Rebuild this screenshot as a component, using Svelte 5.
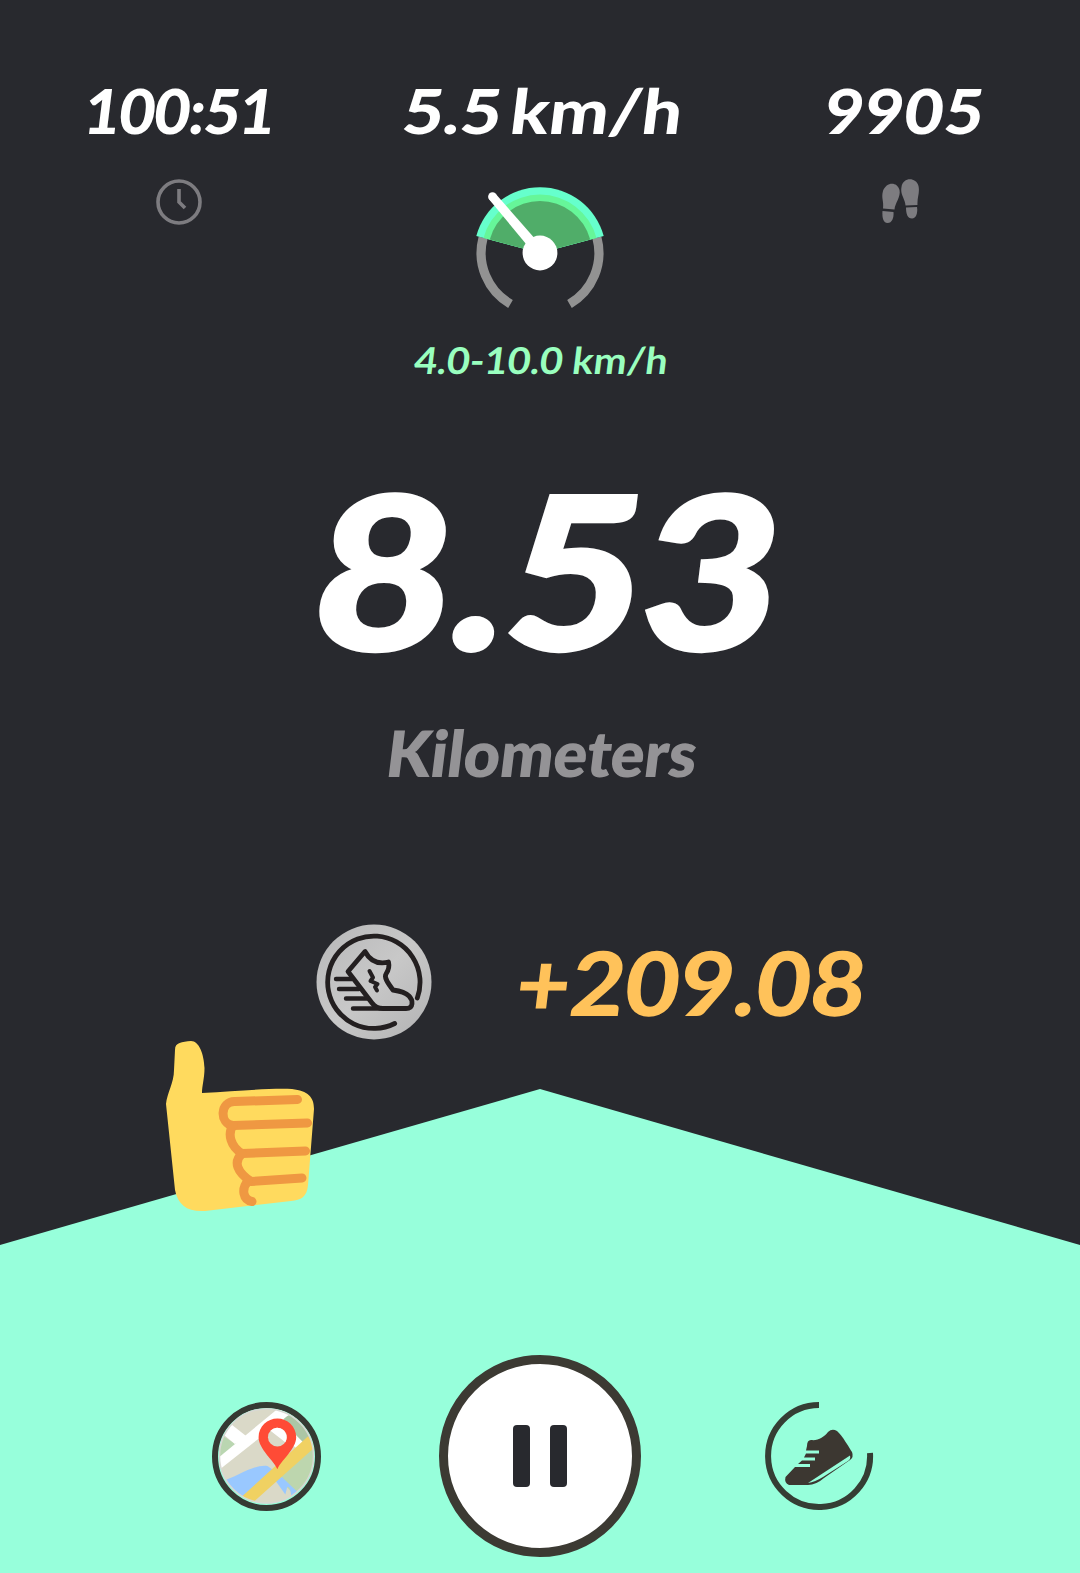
<script lang="ts">
  let time = "100:51";
  let speed = "5.5";
  let steps = 9905;
  let range = "4.0-10.0 km/h";
  let distance = "8.53";
  let earned = "+209.08";
  let paused = false;

  function togglePause(){
    paused = !paused;
  }
</script>

<main class="screen">
  <header class="stats">
    <div class="stat">
      <div class="value time">{time}</div>
      <svg class="icon" width="46" height="46" viewBox="0 0 46 46" fill="none" stroke="#7d7c80">
        <circle cx="23" cy="23" r="21" stroke-width="3.6" />
        <path d="M23 10v13l6 6" stroke-width="3.6" />
      </svg>
    </div>

    <div class="stat">
      <div class="value speed">{speed}<span class="unit">km/h</span></div>
      <svg class="gauge" width="136" height="128" viewBox="-68 -68 136 128">
        <path d="M-56.9 -15.2A58.9 58.9 0 0 0 -29.5 51M56.9 -15.2A58.9 58.9 0 0 1 29.5 51" fill="none" stroke="#929292" stroke-width="9.2" />
        <path d="M0 0L-63.7 -17A66 66 0 0 1 63.7 -17Z" fill="#66ffcc" />
        <path d="M0 0L-56.5 -15.1A58.5 58.5 0 0 1 56.5 -15.1Z" fill="#66f699" />
        <path d="M0 0L-50.2 -13.5A52 52 0 0 1 50.2 -13.5Z" fill="#50ad69" />
        <path d="M-50.8 -53.5L-4 3L4 -4L-44.2 -59Z" fill="#fff" />
        <circle cx="-47.5" cy="-56.3" r="4.4" fill="#fff" />
        <circle r="17.4" fill="#fff" />
      </svg>
      <div class="range">{range}</div>
    </div>

    <div class="stat">
      <div class="value steps">{steps}</div>
      <svg class="icon" width="40" height="46" viewBox="0 0 40 46" fill="#7d7c80">
        <path d="M2 29.500C3 22 0 19 2 12C5 3 16 2 18.500 11C20 18 14 24 13.500 30.500Z" />
        <path d="M1.500 32L12.500 33C13 39 11 44 6.500 44C2 44 1 38 1.500 32Z" />
        <path d="M24.500 26.500C24 19 19 16 20.500 8C22 -2 35 -2 37.500 7C39 14 36 18 36.500 26Z" />
        <path d="M25 28.500L36 28C37 34 35 39.500 31 39.500C26.500 39.500 25 35 25 28.500Z" />
      </svg>
    </div>
  </header>

  <section class="distance">
    <div class="number">{distance}</div>
    <div class="label">Kilometers</div>
  </section>

  <section class="earnings">
    <svg class="coin" width="116" height="116" viewBox="0 0 116 116" fill="none" stroke="#231f20" stroke-width="4.8" stroke-linecap="round" stroke-linejoin="round">
      <defs>
        <linearGradient id="silver" x1="0" y1="0" x2="1" y2="1">
          <stop offset="0" stop-color="#b7b7b8" />
          <stop offset=".5" stop-color="#c8c8c8" />
          <stop offset="1" stop-color="#b2b2b3" />
        </linearGradient>
      </defs>
      <circle cx="58" cy="58" r="57.500" fill="url(#silver)" stroke="none" />
      <path d="M101.300 74A46.200 46.200 0 1 0 78.700 99.500" />
      <path d="M49 27.500L32 47.500L56 79Q60 84.500 67 84.500H90C98 84.500 97 76 93 72C89 68 84 67 77 66C71 58 68 53 70 50Q74 44 72.500 38C60 41 53 35 49 27.500Z" />
      <path d="M53.500 47L57 53.500L54.500 57L61.500 60L59 63L61 66.500" stroke-width="4" />
      <path d="M20 55H36M23 65H43M30 74.500H51M37 84.500H68" stroke-width="4.400" />
    </svg>
    <div class="amount">{earned}</div>
  </section>

  <footer class="panel">
    <svg class="thumb" width="152" height="174" viewBox="0 0 152 174">
      <path d="M10 10C10 2 17 2 26 1C34 1 39 14 39.500 28C39.500 38 37 46 37 53C75 51 105 48 127 49C143 51 149 57 149 69L143 145C142 157 136 160 126 161L40 171C22 172 13 165 10 150L1 64C2 53 9 43 9 30Z" fill="#ffda5e" />
      <g fill="none" stroke="#ef9842" stroke-width="9" stroke-linecap="round" stroke-linejoin="round">
        <path d="M132.500 59.500L70 61.500C55 61 54 84 68 85.500L142.500 83" />
        <path d="M68 85.500C62 94 66 107 77 113.500L140.500 111" />
        <path d="M77 113.500C68 122 72 132 86 141.500L137 138" />
        <path d="M83 141C76 149 78 160 87 161.500" />
      </g>
    </svg>

    <nav class="controls">
      <button class="round map" aria-label="Map">
        <svg width="98" height="98" viewBox="0 0 98 98">
          <defs>
            <clipPath id="mapClip"><circle cx="49" cy="49" r="48" /></clipPath>
          </defs>
          <g clip-path="url(#mapClip)">
            <rect width="98" height="98" fill="#dad9c8" />
            <path d="M0 26L18 37L4 50L-2 50Z" fill="#bad6b1" />
            <path d="M67 8L98 8V36L82 38L66 22Z" fill="#acc6a5" />
            <path d="M98 36L59 70L80 91L98 75Z" fill="#bdd6ae" />
            <path d="M0 51L62 0L72 7L0 64Z" fill="#fff" />
            <path d="M12 16L4 26L17 37L30 30Z" fill="#fff" />
            <path d="M62 11L86 35L79 41L49 18Z" fill="#fff" />
            <path d="M0 76C20 70 36 57 50 59L61 67L82 87L75 94C73 83 73 80 70 80L68 88L56 71L30 91L11 87Z" fill="#99c8ff" />
            <path d="M91 29L98 40L33 98L22 92Z" fill="#f0d162" />
            <path d="M60 62.500C57 54 41 42 41 30C41 19 50 11 60 11C70 11 79 19 79 30C79 42 63 54 60 62.500Z" fill="#ff4b36" />
            <circle cx="60" cy="30" r="9.500" fill="#dad9c8" />
            <path d="M53 23.500A9.500 9.500 0 0 1 68 35Z" fill="#fff" />
          </g>
          <circle cx="49" cy="49" r="47.500" fill="none" stroke="#d8d8d4" stroke-width="1.500" />
        </svg>
      </button>

      <button class="round pause" onclick={togglePause} aria-label="Pause">
        <span class="bar"></span>
        <span class="bar"></span>
      </button>

      <button class="shoe" aria-label="Sneaker">
        <svg width="110" height="110" viewBox="0 0 110 110">
          <path d="M55 4A51 51 0 1 0 106 52" fill="none" stroke="#353e34" stroke-width="6" />
          <path d="M43 45Q43 39 47 39C54 40 60 36 64 31Q68 27 73 30C78 34 86 48 88 51Q90 56 86 59L60 77Q52 84 44 84H25Q20 82 21.500 76L31 66H46V63H34L38 59.500H51V56.500H40L42 52.500H55V49.500H42Z" fill="#3c3731" />
          <path d="M44 82L86 54.500Q87 58 84 60L59 76Q51 81 44 82Z" fill="#97ffdb" />
        </svg>
      </button>
    </nav>
  </footer>
</main>

<style>
  :global(body) {
    background: #28292e;
  }

  .screen {
    width: 1080px;
    height: 1573px;
    overflow: hidden;
    display: flex;
    flex-direction: column;
    background: #28292e;
    color: #fff;
    font-family: Lato, "Open Sans", sans-serif;
    font-weight: 900;
    white-space: nowrap;
  }

  .stats {
    display: grid;
    grid-template-columns: 357px 1fr 357px;
    height: 470px;
    box-sizing: border-box;
    padding-top: 79px;
    padding-right: 1px;
  }

  .stat {
    display: flex;
    flex-direction: column;
    align-items: center;
  }

  /* slanted upright glyphs instead of the cursive italic */
  .value,
  .range,
  .number,
  .label,
  .amount {
    transform: skewX(-7deg);
  }

  .value {
    font-size: 62px;
    line-height: 62px;
    font-weight: 900;
  }

  .time {
    letter-spacing: -1px;
    padding-left: 2px;
  }

  .speed {
    padding-left: 7px;
    transform: skewX(-7deg) scaleX(1.14);
  }

  .steps {
    letter-spacing: 1px;
    padding-left: 8px;
    transform: skewX(-7deg) scaleX(1.08);
  }

  .unit {
    margin-left: 8px;
  }

  .icon {
    margin-top: 38px;
  }

  .gauge {
    margin-top: 44px;
  }

  .range {
    margin-top: 28px;
    padding-left: 3px;
    font-size: 37px;
    line-height: 38px;
    font-weight: 700;
    color: #99ffbf;
    transform: skewX(-7deg) scaleX(1.07);
  }

  .distance {
    display: flex;
    flex-direction: column;
    align-items: center;
    height: 453px;
  }

  .number {
    padding-left: 17px;
    font-size: 213px;
    line-height: 196px;
    transform: skewX(-7deg) scaleX(1.1);
    -webkit-text-stroke: 3px #fff;
  }

  .label {
    margin-top: 55px;
    padding-left: 5px;
    font-size: 64px;
    line-height: 64px;
    font-weight: 800;
    color: #949396;
    transform: skewX(-7deg) scaleX(0.98);
  }

  .earnings {
    display: flex;
    align-items: center;
    height: 118px;
    padding-left: 316px;
  }

  .amount {
    margin-left: 85px;
    font-size: 89px;
    line-height: 90px;
    color: #ffc25a;
    transform-origin: left center;
    transform: skewX(-7deg) scaleX(1.055);
  }

  .panel {
    position: relative;
    flex: 1;
    margin-top: 48px;
    display: flex;
    align-items: flex-end;
  }

  .panel::before {
    content: '';
    position: absolute;
    inset: 0;
    background: #97ffdb;
    clip-path: polygon(0 156px, 50% 0, 100% 156px, 100% 100%, 0 100%);
  }

  /* overlaps the edge of the panel */
  .thumb {
    position: absolute;
    left: 165px;
    top: -49px;
  }

  .controls {
    position: relative;
    display: flex;
    align-items: center;
    justify-content: space-between;
    width: 100%;
    padding: 0 206px 16px 212px;
  }

  button {
    display: flex;
    align-items: center;
    justify-content: center;
    padding: 0;
    border: none;
    background: none;
    cursor: pointer;
  }

  .round {
    box-sizing: border-box;
    border-radius: 50%;
    border: 6px solid #353a33;
  }

  .map {
    width: 109px;
    height: 109px;
  }

  .pause {
    width: 202px;
    height: 202px;
    margin-right: 6px;
    border: 9px solid #3c3a33;
    background: #fff;
    gap: 20px;
  }

  .bar {
    width: 17px;
    height: 62px;
    border-radius: 4px;
    background: #28292e;
  }
</style>
